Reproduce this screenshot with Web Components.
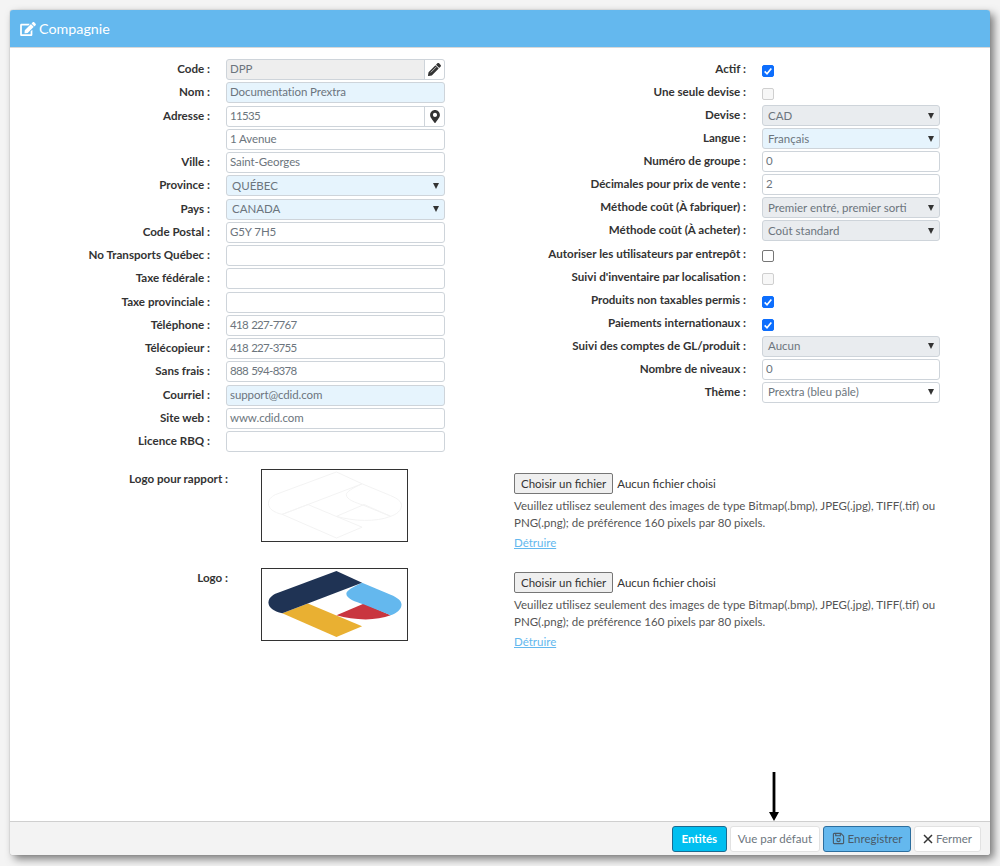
<!DOCTYPE html>
<html lang="fr">
<head>
<meta charset="utf-8">
<title>Compagnie</title>
<style>
html, body { margin: 0; height: 100%; }
body { box-sizing: border-box; height: 866px; padding: 10px 10px 11px; background: #f4f4f4; font: 11.5px Lato, "Liberation Sans", sans-serif; color: #333; overflow: hidden; }
.col-left { --label-w: 200px; --gap: 16px; --ctl-w: 219px; --row-gap: 2.25px; }
.col-right { --label-w: 246px; --gap: 16px; --ctl-w: 178px; --row-gap: 2.07px; }
</style>
</head>
<body>

<x-panel>
  <span slot="title">Compagnie</span>
  <x-column slot="left" class="col-left">
    <x-row label="Code :"><x-input disabled icon="pencil">DPP</x-input></x-row>
    <x-row label="Nom :"><x-input required>Documentation Prextra</x-input></x-row>
    <x-row label="Adresse :"><x-input icon="marker" num>11535</x-input></x-row>
    <x-row><x-input>1 Avenue</x-input></x-row>
    <x-row label="Ville :"><x-input>Saint-Georges</x-input></x-row>
    <x-row label="Province :"><x-select required>QUÉBEC</x-select></x-row>
    <x-row label="Pays :"><x-select required>CANADA</x-select></x-row>
    <x-row label="Code Postal :"><x-input>G5Y 7H5</x-input></x-row>
    <x-row label="No Transports Québec :"><x-input></x-input></x-row>
    <x-row label="Taxe fédérale :"><x-input></x-input></x-row>
    <x-row label="Taxe provinciale :"><x-input></x-input></x-row>
    <x-row label="Téléphone :"><x-input num>418 227-7767</x-input></x-row>
    <x-row label="Télécopieur :"><x-input num>418 227-3755</x-input></x-row>
    <x-row label="Sans frais :"><x-input num>888 594-8378</x-input></x-row>
    <x-row label="Courriel :"><x-input required>support@cdid.com</x-input></x-row>
    <x-row label="Site web :"><x-input>www.cdid.com</x-input></x-row>
    <x-row label="Licence RBQ :"><x-input></x-input></x-row>
  </x-column>
  <x-column slot="right" class="col-right">
    <x-row label="Actif :"><x-check checked></x-check></x-row>
    <x-row label="Une seule devise :"><x-check disabled></x-check></x-row>
    <x-row label="Devise :"><x-select disabled>CAD</x-select></x-row>
    <x-row label="Langue :"><x-select required>Français</x-select></x-row>
    <x-row label="Numéro de groupe :"><x-input>0</x-input></x-row>
    <x-row label="Décimales pour prix de vente :"><x-input>2</x-input></x-row>
    <x-row label="Méthode coût (À fabriquer) :"><x-select disabled>Premier entré, premier sorti</x-select></x-row>
    <x-row label="Méthode coût (À acheter) :"><x-select disabled>Coût standard</x-select></x-row>
    <x-row label="Autoriser les utilisateurs par entrepôt :"><x-check></x-check></x-row>
    <x-row label="Suivi d'inventaire par localisation :"><x-check disabled></x-check></x-row>
    <x-row label="Produits non taxables permis :"><x-check checked></x-check></x-row>
    <x-row label="Paiements internationaux :"><x-check checked></x-check></x-row>
    <x-row label="Suivi des comptes de GL/produit :"><x-select disabled>Aucun</x-select></x-row>
    <x-row label="Nombre de niveaux :"><x-input>0</x-input></x-row>
    <x-row label="Thème :"><x-select>Prextra (bleu pâle)</x-select></x-row>
  </x-column>
  <x-logo-row slot="logos" label="Logo pour rapport :" faint></x-logo-row>
  <x-logo-row slot="logos" label="Logo :"></x-logo-row>
  <x-arrow slot="overlay"></x-arrow>
  <x-button slot="footer" kind="cyan">Entités</x-button>
  <x-button slot="footer">Vue par défaut</x-button>
  <x-button slot="footer" kind="blue" icon="save">Enregistrer</x-button>
  <x-button slot="footer" icon="times">Fermer</x-button>
</x-panel>

<script>
const icons = {
    edit: `<svg viewBox="0 0 576 512" width="16" height="14" fill="currentColor"><path d="M402.6 83.2l90.2 90.2c3.8 3.8 3.8 10 0 13.8L274.4 405.6l-92.8 10.3c-12.4 1.4-22.9-9.1-21.5-21.5l10.3-92.8L388.8 83.2c3.8-3.8 10-3.8 13.8 0zm162-22.9l-48.8-48.8c-15.2-15.2-39.9-15.2-55.2 0l-35.4 35.4c-3.8 3.8-3.8 10 0 13.8l90.2 90.2c3.8 3.8 10 3.8 13.8 0l35.4-35.4c15.2-15.3 15.2-40 0-55.2zM384 346.2V448H64V128h229.8c3.2 0 6.2-1.3 8.5-3.5l40-40c7.6-7.6 2.2-20.5-8.5-20.5H48C21.5 64 0 85.5 0 112v352c0 26.5 21.5 48 48 48h352c26.5 0 48-21.5 48-48V306.2c0-10.7-12.9-16-20.5-8.5l-40 40c-2.2 2.3-3.5 5.3-3.5 8.5z"/></svg>`,
    pencil: `<svg viewBox="0 0 512 512" width="13" height="13" fill="#333"><path d="M497.9 142.1l-46.1 46.1c-4.7 4.7-12.3 4.7-17 0l-111-111c-4.7-4.7-4.7-12.3 0-17l46.1-46.1c18.7-18.7 49.1-18.7 67.9 0l60.1 60.1c18.8 18.7 18.8 49.1 0 67.9zM284.2 99.8L21.6 362.4.4 483.9c-2.9 16.4 11.4 30.6 27.8 27.8l121.5-21.3 262.6-262.6c4.7-4.7 4.7-12.3 0-17l-111-111c-4.8-4.7-12.4-4.7-17.1 0z"/><path d="M330 150L110 370" stroke="#fff" stroke-width="26"/></svg>`,
    marker: `<svg viewBox="0 0 384 512" width="10" height="13" fill="#333"><path d="M172.268 501.67C26.97 291.031 0 268.413 0 192 0 85.961 85.961 0 192 0s192 85.961 192 192c0 76.413-26.97 99.031-172.268 309.67-9.535 13.774-29.93 13.773-39.464 0zM192 272c44.183 0 80-35.817 80-80s-35.817-80-80-80-80 35.817-80 80 35.817 80 80 80z"/></svg>`,
    save: `<svg viewBox="0 0 14 14" width="13" height="13" fill="none" stroke="currentColor" stroke-width="1.2"><path d="M2.5 1.5h7l3 3v7a1 1 0 0 1-1 1h-9a1 1 0 0 1-1-1v-9a1 1 0 0 1 1-1z"/><path d="M4 1.5v2.5h5V1.5"/><circle cx="7" cy="8.6" r="1.8"/></svg>`,
    times: `<svg viewBox="0 0 10 10" width="10" height="10" fill="none" stroke="#333" stroke-width="1.5"><path d="M1 1l8 8M9 1l-8 8"/></svg>`
};

class XPanel extends HTMLElement {
    constructor() {
        super();
        this.attachShadow({ mode: 'open' }).innerHTML = `
    <style>
        :host { display: flex; flex-direction: column; position: relative; height: 100%; background: #fff; border-radius: 3px; box-shadow: 0 0 1px #777, 4px 4px 8px rgba(0,0,0,.5); }
        header { display: flex; align-items: center; gap: 3px; height: 37px; padding: 0 10px; flex: none; background: #64b8ee; color: #fff; font-size: 14.3px; border-radius: 3px 3px 0 0; border-bottom: 1px solid #d8d8d8; }
        main { flex: 1; }
        .cols { display: flex; padding-top: 11px; }
        .left { width: 490px; }
        .logos { display: flex; flex-direction: column; gap: 26px; margin-top: 17px; }
        footer { display: flex; justify-content: flex-end; align-items: center; gap: 3px; height: 33px; padding-right: 9px; flex: none; background: #f3f3f3; border-top: 1px solid #cfcfcf; border-radius: 0 0 3px 3px; }
    </style>
    <header>${icons.edit}<slot name="title"></slot></header>
    <main>
        <div class="cols">
            <div class="left"><slot name="left"></slot></div>
            <div><slot name="right"></slot></div>
        </div>
        <div class="logos"><slot name="logos"></slot></div>
    </main>
    <slot name="overlay"></slot>
    <footer><slot name="footer"></slot></footer>
    `
    }
}

class XColumn extends HTMLElement {
    constructor() {
        super();
        this.attachShadow({ mode: 'open' }).innerHTML = `
    <style>:host { display: flex; flex-direction: column; gap: var(--row-gap); }</style>
    <slot></slot>
    `
    }
}

class XRow extends HTMLElement {
    constructor() {
        super();
        this.attachShadow({ mode: 'open' }).innerHTML = `
    <style>
        :host { display: grid; grid-template-columns: var(--label-w) var(--ctl-w); column-gap: var(--gap); align-items: center; height: 21px; }
        label { text-align: right; font-size: 11.6px; font-weight: 700; color: #333; white-space: nowrap; padding-bottom: 2px; }
    </style>
    <label></label><div><slot></slot></div>
    `
    }
    connectedCallback() {
        this.shadowRoot.querySelector('label').textContent = this.getAttribute('label') || '';
    }
}

class XInput extends HTMLElement {
    constructor() {
        super();
        this.attachShadow({ mode: 'open' }).innerHTML = `
    <style>
        :host { display: flex; height: 21px; box-sizing: border-box; background: #fff; border: 1px solid #ced4da; border-radius: 3px; color: #6c757d; letter-spacing: -.1px; }
        :host([num]) { letter-spacing: -.7px; word-spacing: 1px; }
        :host([required]) { background: #e6f4fd; }
        :host([disabled]) { background: #eee; }
        .txt { flex: 1; padding: 0 3px; line-height: 18px; white-space: nowrap; }
        .btn { display: none; align-items: center; justify-content: center; width: 19px; background: #fff; border-left: 1px solid #ced4da; border-radius: 0 3px 3px 0; }
    </style>
    <div class="txt"><slot></slot></div><div class="btn"></div>
    `
    }
    connectedCallback() {
        const icon = this.getAttribute('icon');
        if (icon) {
            const btn = this.shadowRoot.querySelector('.btn');
            btn.innerHTML = icons[icon];
            btn.style.display = 'flex';
        }
    }
}

class XSelect extends HTMLElement {
    constructor() {
        super();
        this.attachShadow({ mode: 'open' }).innerHTML = `
    <style>
        :host { display: flex; align-items: center; height: 21px; box-sizing: border-box; padding: 0 5px; background: #fff; border: 1px solid #ced4da; border-radius: 3px; color: #6c757d; white-space: nowrap; }
        :host([required]) { background: #e6f4fd; }
        :host([disabled]) { background: #e9ecef; }
        .txt { flex: 1; padding-bottom: 1px; }
        i { width: 0; height: 0; border: 3.5px solid transparent; border-top: 6px solid #333; border-bottom: 0; }
    </style>
    <div class="txt"><slot></slot></div><i></i>
    `
    }
}

class XCheck extends HTMLElement {
    constructor() {
        super();
        this.attachShadow({ mode: 'open' }).innerHTML = `
    <style>
        :host { display: flex; align-items: center; justify-content: center; width: 12px; height: 12px; margin-top: 3px; box-sizing: border-box; background: #fff; border: 1px solid #767676; border-radius: 2px; }
        :host([checked]) { background: #0d6efd; border-color: #0d6efd; }
        :host([disabled]) { background: #f7f7f7; border-color: #cfcfcf; }
        svg { display: none; }
        :host([checked]) svg { display: block; }
    </style>
    <svg viewBox="0 0 12 12" width="10" height="10" fill="none" stroke="#fff" stroke-width="2"><path d="M2 6.5l2.8 2.8L10 3"/></svg>
    `
    }
}

class XLogoRow extends HTMLElement {
    constructor() {
        super();
        this.attachShadow({ mode: 'open' }).innerHTML = `
    <style>
        :host { display: grid; grid-template-columns: 218px 147px 425px; height: 73px; }
        label { text-align: right; font-size: 11.6px; font-weight: 700; padding-top: 3px; }
        .box { box-sizing: border-box; width: 147px; height: 73px; margin-left: 33px; border: 1.5px solid #333; background: #fff; overflow: hidden; }
        .box svg { display: block; }
        .file { margin-left: 139px; width: 426px; padding-top: 4px; color: #555; }
        .pick { display: flex; align-items: center; gap: 4px; color: #333; }
        .pick b { font-weight: 400; box-sizing: border-box; height: 21px; line-height: 19px; padding: 0 6px; background: #efefef; border: 1px solid #767676; border-radius: 2px; }
        p { margin: 3px 0 0; line-height: 17px; }
        a { display: block; margin-top: 5px; color: #64b8ee; text-decoration: underline; }
    </style>
    <label></label>
    <div class="box"></div>
    <div class="file">
        <div class="pick"><b>Choisir un fichier</b><span>Aucun fichier choisi</span></div>
        <p>Veuillez utilisez seulement des images de type Bitmap(.bmp), JPEG(.jpg), TIFF(.tif) ou PNG(.png); de préférence 160 pixels par 80 pixels.</p>
        <a href="#">Détruire</a>
    </div>
    `
    }
    connectedCallback() {
        this.shadowRoot.querySelector('label').textContent = this.getAttribute('label');
        const navy = 'M75 2L101 14 20 45C11 43 6 39 6 34 6 30 9 27 13 25Z';
        const yellow = 'M20 45L46 35 101 58 75 69Z';
        const blue = 'M101 14L130 26C137 29 141 32 141 36 141 41 136 45 130 47L103 36C94 33 85 30 85 25 85 22 92 18 101 14Z';
        const red = 'M75 47L103 35 130 47C115 53 92 52 75 47Z';
        const box = this.shadowRoot.querySelector('.box');
        if (this.hasAttribute('faint')) {
            box.innerHTML = `<svg viewBox="0 0 145 71" width="144" height="70" fill="none" stroke="#f3f3f3"><path d="${navy}"/><path d="${yellow}"/><path d="${blue}"/><path d="${red}"/></svg>`;
        } else {
            box.innerHTML = `<svg viewBox="0 0 145 71" width="144" height="70"><path fill="#e9b032" d="${yellow}"/><path fill="#c9363f" d="${red}"/><path fill="#64b8ee" d="${blue}"/><path fill="#1f3354" d="${navy}"/></svg>`;
        }
    }
}

class XButton extends HTMLElement {
    constructor() {
        super();
        this.attachShadow({ mode: 'open' }).innerHTML = `
    <style>
        :host { display: flex; align-items: center; justify-content: center; gap: 3px; box-sizing: border-box; height: 26px; padding: 0 7px; background: #fff; border: 1px solid #e2e2e2; border-radius: 3px; color: #6c757d; white-space: nowrap; }
        :host([kind="cyan"]) { background: #00bff0; border-color: #1a6a90; color: #fff; font-weight: 700; padding: 0 8.5px; }
        :host([kind="blue"]) { background: #64b8ee; border-color: #2c6e9e; color: #4a5a68; padding: 0 7.5px; }
        :host([icon="times"]) { padding: 0 8px; }
        span { display: flex; }
        span:empty { display: none; }
    </style>
    <span></span><slot></slot>
    `
    }
    connectedCallback() {
        const icon = this.getAttribute('icon');
        if (icon) this.shadowRoot.querySelector('span').innerHTML = icons[icon];
    }
}

// annotation arrow drawn over the panel, pointing at the footer
class XArrow extends HTMLElement {
    constructor() {
        super();
        this.attachShadow({ mode: 'open' }).innerHTML = `
    <style>:host { position: absolute; left: 759px; top: 762px; width: 10px; height: 49px; }</style>
    <svg viewBox="0 0 10 49" width="10" height="49"><path d="M3.6 0h2.8v40h3.6l-5 9-5-9h3.6z"/></svg>
    `
    }
}

customElements.define('x-panel', XPanel);
customElements.define('x-column', XColumn);
customElements.define('x-row', XRow);
customElements.define('x-input', XInput);
customElements.define('x-select', XSelect);
customElements.define('x-check', XCheck);
customElements.define('x-logo-row', XLogoRow);
customElements.define('x-button', XButton);
customElements.define('x-arrow', XArrow);
</script>
</body>
</html>
